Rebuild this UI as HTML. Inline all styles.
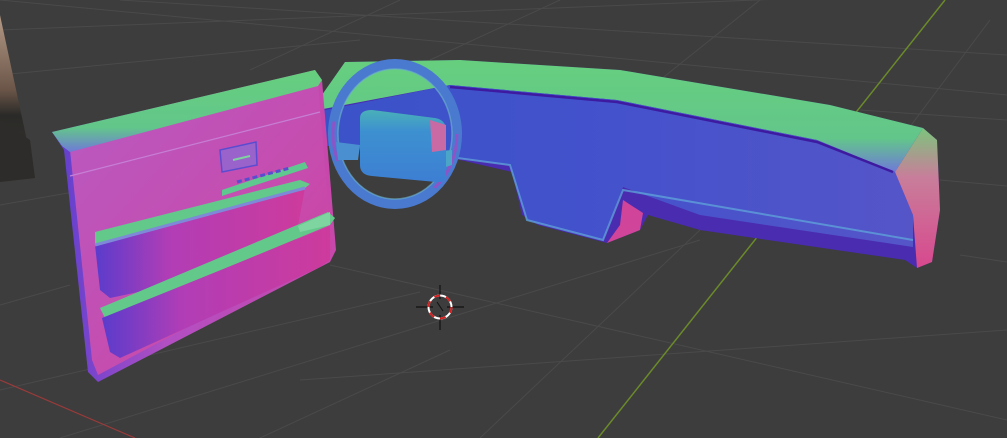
<!DOCTYPE html>
<html><head><meta charset="utf-8"><style>
html,body{margin:0;padding:0;background:#3d3d3d;width:1007px;height:438px;overflow:hidden}
svg{display:block}
</style></head><body>
<svg width="1007" height="438" viewBox="0 0 1007 438" xmlns="http://www.w3.org/2000/svg">
<defs>
<linearGradient id="door" x1="0" y1="0" x2="1" y2="1">
<stop offset="0" stop-color="#b85ac2"/><stop offset="0.6" stop-color="#c64cae"/><stop offset="1" stop-color="#d03c98"/>
</linearGradient>
<linearGradient id="doorL" x1="0" y1="0" x2="1" y2="0">
<stop offset="0" stop-color="#5a3fd0"/><stop offset="0.4" stop-color="#b24fc3"/><stop offset="1" stop-color="#c847aa"/>
</linearGradient>
<linearGradient id="grn" x1="0" y1="0" x2="0" y2="1">
<stop offset="0" stop-color="#66cf7e"/><stop offset="0.7" stop-color="#62c68a"/><stop offset="1" stop-color="#6f7ad8"/>
</linearGradient>
<linearGradient id="face" x1="0" y1="0" x2="1" y2="0">
<stop offset="0" stop-color="#3a52c8"/><stop offset="0.5" stop-color="#4452cc"/><stop offset="1" stop-color="#5555c8"/>
</linearGradient>
<linearGradient id="pend" x1="0" y1="0" x2="0" y2="1">
<stop offset="0" stop-color="#7cc47c"/><stop offset="0.35" stop-color="#c87e9a"/><stop offset="1" stop-color="#d8488e"/>
</linearGradient>
<linearGradient id="hub" x1="0" y1="0" x2="0" y2="1">
<stop offset="0" stop-color="#4ab0b8"/><stop offset="0.3" stop-color="#3d90d0"/><stop offset="1" stop-color="#3d7fd3"/>
</linearGradient>
<linearGradient id="pocket" x1="0" y1="0" x2="1" y2="0">
<stop offset="0" stop-color="#5a3ccc"/><stop offset="0.35" stop-color="#b13db6"/><stop offset="1" stop-color="#cd3b9c"/>
</linearGradient>
<linearGradient id="photo" x1="0" y1="0" x2="0" y2="1">
<stop offset="0" stop-color="#b59a86"/><stop offset="0.45" stop-color="#6a5548"/><stop offset="0.6" stop-color="#2a2a28"/><stop offset="1" stop-color="#3a3530"/>
</linearGradient>
</defs>
<g stroke="#4a4a4a" stroke-width="1" fill="none">
<path d="M0 30 L1007 -10"/><path d="M0 75 L360 40"/><path d="M0 0 L1007 95"/>
<path d="M120 0 L1007 55"/>
<path d="M0 205 L170 175"/><path d="M0 305 L70 285"/>
<path d="M330 265 L1007 420"/><path d="M300 380 L1007 330"/>
<path d="M960 255 L1007 262"/><path d="M940 180 L1007 186"/>
<path d="M0 390 L420 292"/><path d="M60 438 L700 240"/><path d="M260 438 L450 350"/>
<path d="M860 110 L1007 120"/>
<path d="M560 0 L430 60"/><path d="M760 0 L660 80"/><path d="M990 20 L900 140"/>
<path d="M700 230 L480 438"/><path d="M400 0 L250 70"/>
</g>
<path d="M945 0 L598 438" stroke="#6b8a2a" stroke-width="1.5"/>
<path d="M0 380 L135 438" stroke="#9a3a3a" stroke-width="1.2"/>
<path d="M0 15 L35 178 L0 182 Z" fill="url(#photo)"/>
<path d="M0 120 L30 140 L35 178 L0 182Z" fill="#2e2c2a"/>
<!-- dashboard -->
<path d="M310 112 L345 62 L460 60 L620 70 L830 105 L923 128 L937 140 L940 210 L932 262 L917 268 L905 260 L700 230 L648 215 L640 230 L607 243 L538 225 L522 215 L512 172 L460 160 L318 145 Z" fill="#4a2cb0"/>
<path d="M310 112 L345 62 L460 60 L620 70 L830 105 L923 128 L895 172 L817 140 L617 100 L450 85 L318 110 Z" fill="url(#grn)"/>
<path d="M450 85 L617 100 L817 140 L895 172 L913 215 L913 247 L700 215 L623 187 L603 240 L527 220 L510 165 L450 157 L318 145 L316 112 Z" fill="url(#face)"/>
<path d="M450 87 L617 102 L817 142 L893 172" stroke="#3e1aa0" stroke-width="2.5" fill="none"/>
<path d="M450 157 L510 165 L527 220 L603 240 L623 190 L913 240" stroke="#5ea0d8" stroke-width="2" fill="none" opacity="0.8"/>
<path d="M923 128 L937 140 L940 210 L932 262 L917 268 L913 215 L895 172Z" fill="url(#pend)"/>
<path d="M623 200 L643 213 L640 230 L607 243 L620 225Z" fill="#d0449a"/>
<!-- steering wheel -->
<ellipse cx="395" cy="134" rx="62" ry="70" fill="none" stroke="#4a7ad0" stroke-width="10"/>
<ellipse cx="395" cy="134" rx="62" ry="70" fill="none" stroke="#8b55c8" stroke-width="3" stroke-dasharray="60 120 40 200"/>
<ellipse cx="395" cy="134" rx="57" ry="65" fill="none" stroke="#6fb6c8" stroke-width="1.5" opacity="0.6"/>
<path d="M336 142 L360 145 L358 160 L338 160Z" fill="#4a8fd0"/>
<path d="M430 152 L452 150 L452 165 L430 172Z" fill="#4aa5c8"/>
<path d="M360 118 Q360 110 372 110 L435 118 Q446 120 446 130 L446 175 Q446 183 436 182 L372 176 Q360 175 360 165 Z" fill="url(#hub)"/>
<path d="M430 120 L446 125 L446 150 L432 152Z" fill="#c96aa5"/>
<!-- door -->
<path d="M52 132 L315 70 L322 80 L336 250 L330 262 L98 382 L88 372 L64 150 Z" fill="url(#doorL)"/>
<path d="M70 150 L318 82 L332 250 L98 375 L92 360 Z" fill="url(#door)"/>
<path d="M52 132 L315 70 L322 80 L318 86 L70 152 L62 146Z" fill="url(#grn)"/>
<path d="M70 176 L320 112" stroke="#c67fd4" stroke-width="1.2"/>
<path d="M220 150 L256 142 L257 165 L222 172Z" fill="#9a63cc" stroke="#5a4cd0" stroke-width="1.5"/>
<path d="M233 160 L250 156" stroke="#7fd1a0" stroke-width="2"/>
<path d="M222 190 L305 162 L308 168 L222 196Z" fill="#5fc88e"/>
<path d="M237 182 L290 168" stroke="#5a4cd0" stroke-width="3" stroke-dasharray="5 3"/>
<path d="M95 232 L300 180 L310 184 L300 192 L95 245Z" fill="#62c98a"/>
<path d="M95 245 L305 188 L292 258 L280 262 L110 298 L100 290 Z" fill="url(#pocket)"/>
<path d="M95 245 L305 188" stroke="#7e8ad8" stroke-width="3"/>
<path d="M100 308 L328 212 L335 218 L330 225 L105 318Z" fill="#62c98a"/>
<path d="M102 318 L330 226 L330 260 L318 268 L120 358 L110 352 Z" fill="url(#pocket)"/>
<path d="M298 226 L330 212 L330 225 L300 232Z" fill="#7ed5a0"/>
<g>
<path d="M440 285 V330 M416 307 H464" stroke="#111" stroke-width="1.2"/>
<circle cx="440" cy="307" r="11.5" fill="none" stroke="#fff" stroke-width="2"/>
<circle cx="440" cy="307" r="11.5" fill="none" stroke="#d42020" stroke-width="2" stroke-dasharray="6 6"/>
<rect x="433" y="299" width="14" height="16" fill="#3d3d3d"/>
<path d="M437 302 L443 311" stroke="#111"/>
</g>
</svg>
</body></html>
